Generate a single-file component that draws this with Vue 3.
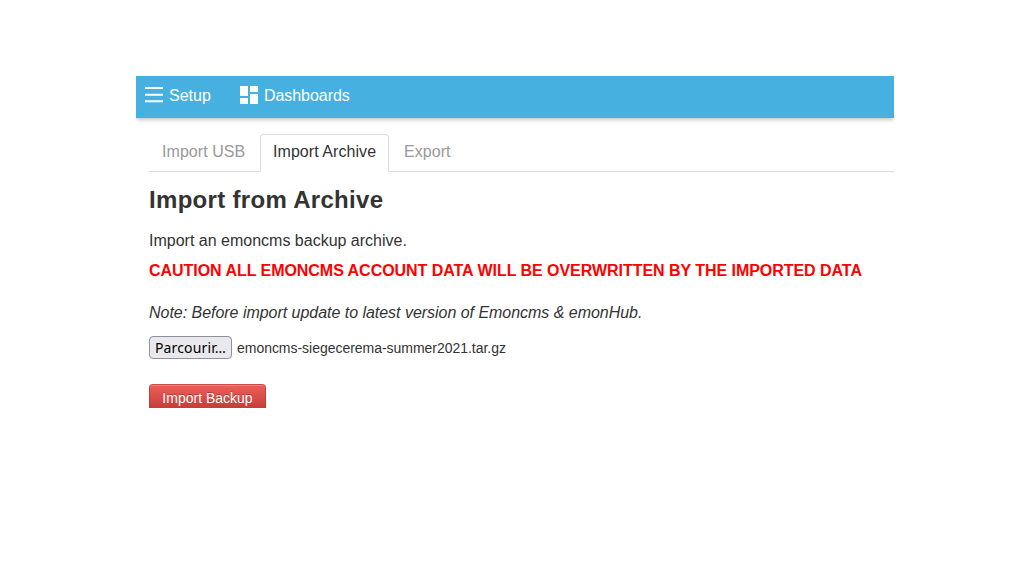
<script setup>
const tabs = [
  { label: 'Import USB', key: 'usb' },
  { label: 'Import Archive', key: 'archive', active: true },
  { label: 'Export', key: 'export' },
]
</script>

<template>
  <div class="window">
    <header class="navbar">
      <a class="nav-item setup">
        <svg width="18" height="18" viewBox="0 0 18 18" fill="#fff">
          <path d="M0 1h18v2H0z M0 7.8h18v2H0z M0 14.3h18v2H0z" />
        </svg>
        <span>Setup</span>
      </a>
      <a class="nav-item dashboards">
        <svg width="18" height="18" viewBox="0 0 18 18" fill="#fff" shape-rendering="crispEdges">
          <path d="M0 0h8v10H0z M10 0h8v6h-8z M0 12h8v6H0z M10 8h8v10h-8z" />
        </svg>
        <span>Dashboards</span>
      </a>
    </header>
    <main class="content">
      <nav class="tabs">
        <a v-for="tab in tabs" :key="tab.key" class="tab" :class="[tab.key, { active: tab.active }]">{{ tab.label }}</a>
      </nav>
      <h2>Import from Archive</h2>
      <p class="intro">Import an emoncms backup archive.</p>
      <p class="caution">CAUTION ALL EMONCMS ACCOUNT DATA WILL BE OVERWRITTEN BY THE IMPORTED DATA</p>
      <p class="note">Note: Before import update to latest version of Emoncms &amp; emonHub.</p>
      <div class="file">
        <button class="browse">Parcourir…</button>
        <span class="filename">emoncms-siegecerema-summer2021.tar.gz</span>
      </div>
      <button class="submit">Import Backup</button>
    </main>
  </div>
</template>

<style>
body {
  background: #fff;
}
</style>

<style scoped>
.window {
  box-sizing: border-box;
  width: 758px;
  height: 332px;
  margin: 76px 0 0 136px;
  overflow: hidden;
  color: #333;
  font: 16px/20px "Liberation Sans", Arial, sans-serif;
}
.navbar {
  display: flex;
  height: 42px;
  background: #46b1e1;
  box-shadow: 0 1px 5px rgba(0, 0, 0, 0.3);
  color: #fff;
}
.nav-item {
  display: flex;
  align-items: center;
  height: 38px;
  white-space: nowrap;
}
.nav-item span {
  padding-top: 2px;
}
.setup {
  width: 95px;
  padding-left: 9px;
  gap: 6px;
}
.dashboards {
  gap: 6px;
  letter-spacing: -0.06px;
}
.content {
  padding: 16px 0 0 13px;
}
.tabs {
  display: flex;
  height: 37px;
  border-bottom: 1px solid #ddd;
}
.tab {
  box-sizing: border-box;
  height: 38px;
  margin-right: 2px;
  padding: 7px 12px;
  border: 1px solid transparent;
  border-radius: 4px 4px 0 0;
  color: #999;
  letter-spacing: 0.06px;
  white-space: nowrap;
}
.usb {
  width: 109px;
}
.active {
  width: 129px;
  background: #fff;
  border-color: #ddd;
  border-bottom-color: #fff;
  color: #333;
}
h2 {
  margin: 8px 0 0;
  font-size: 24px;
  line-height: 40px;
  letter-spacing: 0.31px;
}
p {
  margin: 0;
  white-space: nowrap;
}
.intro {
  margin-top: 11px;
}
.caution {
  margin-top: 10px;
  color: #f00;
  font-weight: bold;
  letter-spacing: -0.04px;
}
.note {
  margin-top: 22px;
  font-style: italic;
  letter-spacing: -0.03px;
}
.file {
  display: flex;
  align-items: center;
  gap: 5px;
  margin-top: 13px;
  font-size: 14px;
}
.filename {
  letter-spacing: -0.03px;
}
.browse {
  box-sizing: border-box;
  width: 83px;
  height: 23px;
  padding: 0;
  border: 1px solid #8f8f9d;
  border-radius: 4px;
  background: #e9e9ed;
  color: #000;
  font: 14px/21px "Noto Sans", sans-serif;
  letter-spacing: 0.15px;
  white-space: nowrap;
}
.submit {
  display: block;
  box-sizing: border-box;
  width: 117px;
  height: 30px;
  margin-top: 25px;
  padding: 0 0 2px;
  border: 1px solid;
  border-color: #d04a46 #c43c37 #802420;
  border-radius: 4px;
  background: linear-gradient(#ee5f5b, #bd362f);
  box-shadow: inset 0 1px 0 rgba(255, 255, 255, 0.2);
  color: #fff;
  font: 14px/20px "Liberation Sans", Arial, sans-serif;
  text-shadow: 0 -1px 0 rgba(0, 0, 0, 0.25);
}
</style>
